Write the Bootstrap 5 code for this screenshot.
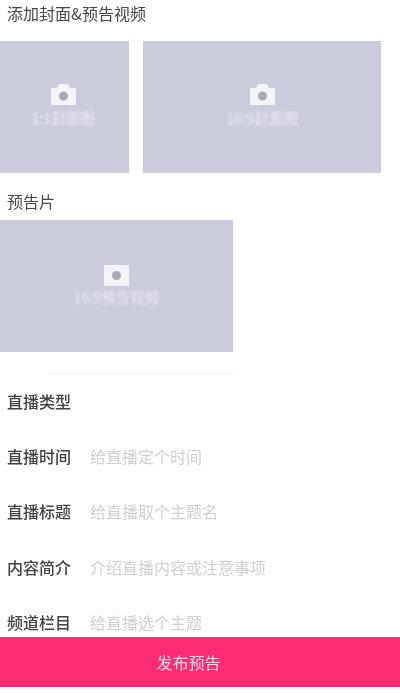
<!DOCTYPE html>
<html lang="zh">
<head>
<meta charset="utf-8">
<meta name="viewport" content="width=device-width, initial-scale=1">
<link href="https://cdn.jsdelivr.net/npm/bootstrap@5.3.0/dist/css/bootstrap.min.css" rel="stylesheet">
<style>
html,body{height:693px;overflow:hidden;background:#fff}
body{font-family:"Noto Sans CJK SC","Liberation Sans",sans-serif;font-size:16px;color:#3b3d42;display:flex;flex-direction:column}
.main-area{height:637px;overflow:hidden;flex:none}
.sec-title{font-size:16px;line-height:22px;color:#45474c;padding-left:7px;filter:blur(.4px)}
.sec-one{padding-top:2px;margin-bottom:17px}
.sec-two{margin-top:17px;margin-bottom:8px}
.thumb{height:132px;background:#cbccdb;color:#fff;flex:none;padding-top:42px}
.thumb-a{width:132px;margin-left:-3px;margin-right:14px}
.thumb-b{width:238px}
.thumb-c{width:233px;padding-top:44px}
.thumb svg{display:block;width:25px;height:23px;filter:blur(.4px)}
.thumb-label{font-size:14.500px;line-height:20px;margin-top:2px;opacity:.6;filter:blur(1px)}
.thumb-c .thumb-label{margin-top:0}
.faint-rule{height:1px;background:#f6f6f8;width:185px;margin:21px 0 0 48px}
.form-line{height:55.300px;padding-left:7px}
.form-line-first{margin-top:-1px}
.line-label{width:83px;font-weight:500;color:#3f4146;flex:none;filter:blur(.4px)}
.line-hint{color:#cfd0d4;filter:blur(.5px)}
.publish-btn{height:50px;flex:none;width:100%;border:0;border-radius:0;background:#fd2a74;color:#fbd3e1;font-size:16px;padding:0;margin:0}
.publish-btn:hover{background:#fd2a74;color:#fbd3e1}
.publish-btn span{display:block;width:65px;margin-left:156px;filter:blur(.4px);white-space:nowrap}
</style>
</head>
<body>
<main class="main-area">
  <div class="sec-title sec-one">添加封面&amp;预告视频</div>
  <div class="d-flex">
    <div class="thumb thumb-a d-flex flex-column align-items-center">
      <svg viewBox="0 0 25 23" aria-hidden="true"><path fill="#f4f4f8" d="M1 5h5l2-4h9l2 4h5a1 1 0 0 1 1 1v16H0V6a1 1 0 0 1 1-1z"/><circle cx="12.500" cy="13" r="4.500" fill="#a9aab8"/></svg>
      <div class="thumb-label">1:1封面图</div>
    </div>
    <div class="thumb thumb-b d-flex flex-column align-items-center">
      <svg viewBox="0 0 25 23" aria-hidden="true"><path fill="#f4f4f8" d="M1 5h5l2-4h9l2 4h5a1 1 0 0 1 1 1v16H0V6a1 1 0 0 1 1-1z"/><circle cx="12.500" cy="13" r="4.500" fill="#a9aab8"/></svg>
      <div class="thumb-label">16:9封面图</div>
    </div>
  </div>
  <div class="sec-title sec-two">预告片</div>
  <div class="thumb thumb-c d-flex flex-column align-items-center">
    <svg viewBox="0 0 25 23" aria-hidden="true"><path fill="#f4f4f8" d="M1 1h23a1 1 0 0 1 1 1v20H0V2a1 1 0 0 1 1-1z"/><circle cx="12.500" cy="11.500" r="4.500" fill="#a9aab8"/></svg>
    <div class="thumb-label">16:9预告视频</div>
  </div>
  <div class="faint-rule"></div>
  <div class="form-line form-line-first d-flex align-items-center"><div class="line-label">直播类型</div></div>
  <div class="form-line d-flex align-items-center"><div class="line-label">直播时间</div><div class="line-hint">给直播定个时间</div></div>
  <div class="form-line d-flex align-items-center"><div class="line-label">直播标题</div><div class="line-hint">给直播取个主题名</div></div>
  <div class="form-line d-flex align-items-center"><div class="line-label">内容简介</div><div class="line-hint">介绍直播内容或注意事项</div></div>
  <div class="form-line d-flex align-items-center"><div class="line-label">频道栏目</div><div class="line-hint">给直播选个主题</div></div>
</main>
<button type="button" class="btn publish-btn"><span>发布预告</span></button>
<script src="https://cdn.jsdelivr.net/npm/bootstrap@5.3.0/dist/js/bootstrap.bundle.min.js"></script>
</body>
</html>
